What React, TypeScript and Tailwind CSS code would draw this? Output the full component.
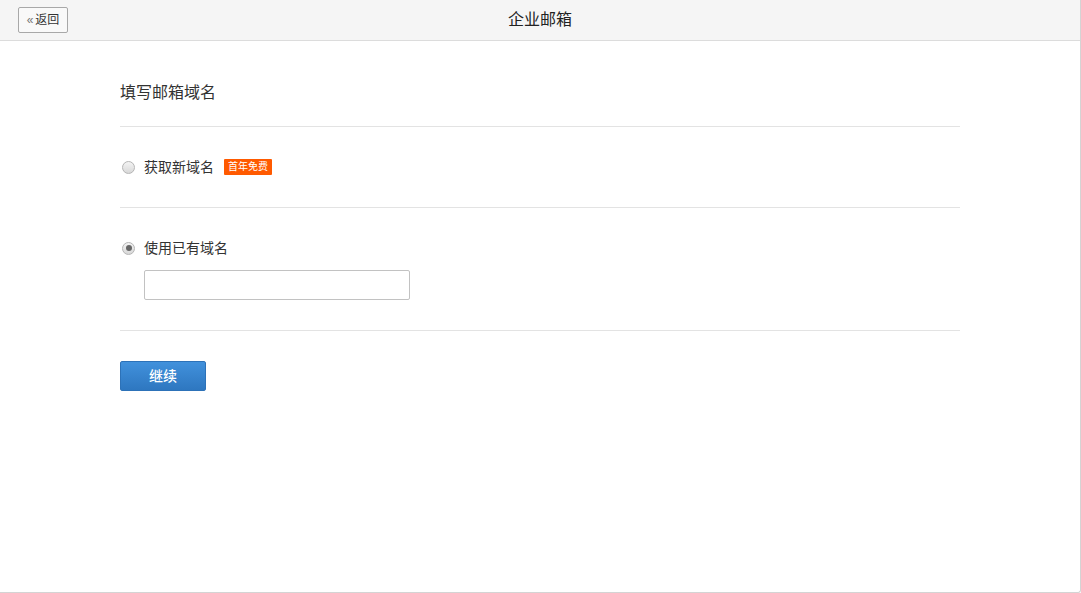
import React from 'react';

const font = { fontFamily: '"Liberation Sans", "Noto Sans CJK SC", sans-serif' };

function Radio({ checked }: { checked?: boolean }) {
  return (
    <span className="w-[13px] h-[13px] rounded-full border border-[#b5b5b5] bg-gradient-to-b from-[#f4f4f4] to-[#d8d8d8] flex items-center justify-center shrink-0">
      {checked && <span className="w-[6px] h-[6px] rounded-full bg-[#666]" />}
    </span>
  );
}

export default function App() {
  return (
    <div className="w-[1081px] h-[593px] bg-white" style={font}>
      <div className="w-[1081px] h-[593px] border-r border-b border-[#d4d4d4] rounded-br-[3px] flex flex-col text-[#333]">
        {/* HEADER */}
        <header className="h-[41px] bg-[#f5f5f5] border-b border-[#dcdcdc] flex items-center relative px-[18px]">
          <button className="h-[26px] w-[50px] border border-[#a8a8a8] rounded-[2px] bg-[#f9f9f9] text-[12px] text-[#333] flex items-center justify-center gap-[2px]">
            <span className="text-[#777] text-[12px] leading-none">«</span>
            <span>返回</span>
          </button>
          <h1 className="absolute left-0 right-0 text-center text-[16px] text-[#222] pointer-events-none">企业邮箱</h1>
        </header>

        {/* BODY */}
        <main className="w-[840px] ml-[120px]">
          <div className="pt-[41px] pb-[22px] text-[16px] text-[#333] leading-[22px]">填写邮箱域名</div>
          <div className="border-t border-[#e3e3e3]" />

          <div className="h-[80px] flex items-center gap-[9px] pl-[2px]">
            <Radio />
            <span className="text-[14px] text-[#333]">获取新域名</span>
            <span className="ml-[1px] h-[16px] px-[4px] bg-[#ff5a00] rounded-[1px] text-white text-[10px] leading-[16px]">首年免费</span>
          </div>
          <div className="border-t border-[#e3e3e3]" />

          <div className="pt-[32px] pb-[30px]">
            <div className="flex items-center gap-[9px] pl-[2px] h-[16px]">
              <Radio checked />
              <span className="text-[14px] text-[#333]">使用已有域名</span>
            </div>
            <input className="mt-[14px] ml-[24px] w-[266px] h-[30px] border border-[#c2c2c2] rounded-[2px] outline-none px-2 text-[13px]" />
          </div>
          <div className="border-t border-[#e3e3e3]" />

          <div className="pt-[30px]">
            <button className="w-[86px] h-[30px] rounded-[2px] border border-[#2d72b8] bg-gradient-to-b from-[#4191dc] to-[#2e77c0] text-white text-[14px] font-medium">
              继续
            </button>
          </div>
        </main>
      </div>
    </div>
  );
}
